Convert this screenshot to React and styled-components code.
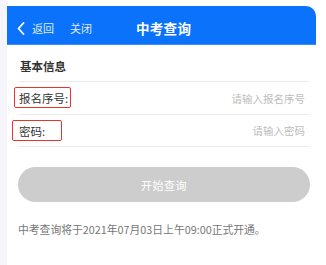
import React from "react";
import styled, { createGlobalStyle } from "styled-components";

const GlobalStyle = createGlobalStyle`
  html, body {
    margin: 0;
    padding: 0;
    background: #fff;
    font-family: "Noto Sans CJK SC", "Noto Sans", "Liberation Sans", sans-serif;
  }
  * {
    box-sizing: border-box;
  }
`;

const Page = styled.div`
  display: flex;
  width: 326px;
  height: 265px;
  overflow: hidden;
`;

const SideStrip = styled.div`
  width: 7px;
  flex: none;
  background: #f6f5fb;
`;

const Main = styled.div`
  flex: 1;
  padding-top: 6px;
  display: flex;
  flex-direction: column;
`;

const NavBar = styled.div`
  height: 39px;
  width: 309px;
  padding: 6px 0 0 10px;
  background: #0b73fb;
  border-top-right-radius: 10px;
  border-bottom: 1px solid #3a8cfb;
  display: flex;
  align-items: center;
  color: #fff;
`;

const NavButton = styled.span`
  display: flex;
  align-items: center;
  font-size: 11px;
  color: rgba(255, 255, 255, 0.88);
  margin-right: ${props => props.$gap || 0}px;
  svg {
    margin-right: 7px;
  }
`;

const Title = styled.span`
  font-size: 13.5px;
  font-weight: 700;
  letter-spacing: 0.3px;
`;

const Content = styled.div`
  padding: 0 16px 0 11px;
`;

const SectionTitle = styled.div`
  height: 36px;
  padding: 13px 0 0 2px;
  font-size: 11.5px;
  font-weight: 700;
  color: #333;
`;

const Row = styled.div`
  position: relative;
  height: 33px;
  border-top: 1px solid #ececec;
  display: flex;
  align-items: center;
  padding: 0 5px 0 1px;
  &:last-of-type {
    border-bottom: 1px solid #ececec;
  }
`;

const Label = styled.span`
  font-size: 11.5px;
  color: #333;
  flex: none;
`;

const Marker = styled.span`
  position: absolute;
  left: ${props => props.$left}px;
  width: ${props => props.$width}px;
  top: 5px;
  height: 21px;
  border: 1.5px solid #e8332f;
  border-radius: 2px;
`;

const Field = styled.input`
  flex: 1;
  min-width: 0;
  border: none;
  outline: none;
  background: transparent;
  text-align: right;
  font-family: inherit;
  font-size: 10.5px;
  color: #333;
  padding: 0;
  &::placeholder {
    color: #bcbcbc;
  }
`;

const SubmitButton = styled.button`
  display: block;
  width: 100%;
  height: 35px;
  margin-top: 20px;
  border: none;
  border-radius: 18px;
  background: #cdcdcd;
  color: #fff;
  font-family: inherit;
  font-size: 11px;
  letter-spacing: 0.5px;
`;

const Notice = styled.p`
  margin: 19px 0 0;
  font-size: 10.8px;
  line-height: 16px;
  color: #777;
`;

const BackIcon = () => (
  <svg width="8" height="13" viewBox="0 0 8 13" fill="none">
    <path d="M6.5 1L1.5 6.5L6.5 12" stroke="#fff" strokeWidth="1.8" strokeLinecap="round" strokeLinejoin="round" />
  </svg>
);

const fields = [
  { label: "报名序号:", placeholder: "请输入报名序号", mark: { left: -4, width: 57 } },
  { label: "密码:", placeholder: "请输入密码", mark: { left: -6, width: 50 } },
];

export default function App() {
  return (
    <>
      <GlobalStyle />
      <Page>
        <SideStrip />
        <Main>
          <NavBar>
            <NavButton $gap={16}>
              <BackIcon />
              返回
            </NavButton>
            <NavButton $gap={44}>关闭</NavButton>
            <Title>中考查询</Title>
          </NavBar>
          <Content>
            <SectionTitle>基本信息</SectionTitle>
            <div>
              {fields.map(f => (
                <Row key={f.label}>
                  <Marker $left={f.mark.left} $width={f.mark.width} />
                  <Label>{f.label}</Label>
                  <Field placeholder={f.placeholder} />
                </Row>
              ))}
            </div>
            <SubmitButton>开始查询</SubmitButton>
            <Notice>中考查询将于2021年07月03日上午09:00正式开通。</Notice>
          </Content>
        </Main>
      </Page>
    </>
  );
}
